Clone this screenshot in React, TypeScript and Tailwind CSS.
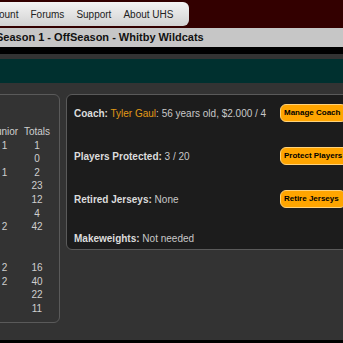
const navItems = ['ount', 'Forums', 'Support', 'About UHS']

const stats: [string, string][] = [
  ['1', '1'],
  ['', '0'],
  ['1', '2'],
  ['', '23'],
  ['', '12'],
  ['', '4'],
  ['2', '42'],
  ['', ''],
  ['', ''],
  ['2', '16'],
  ['2', '40'],
  ['', '22'],
  ['', '11'],
]

function OrangeButton({ label }: { label: string }) {
  return (
    <button className="h-[18px] justify-self-start whitespace-nowrap rounded-[6px] border border-[#ffd27a] bg-[#ffa500] pl-[3px] pr-[6px] text-left text-[8px] font-bold leading-none text-black">
      {label}
    </button>
  )
}

export default function App() {
  return (
    <div className="h-[343px] w-[343px] overflow-hidden bg-[#333333] font-['Liberation_Sans',Arial,sans-serif]">
      {/* top nav */}
      <div className="h-[28px] bg-[#330000] pt-[2px]">
        <div className="flex h-[24px] w-[189px] items-center gap-[12px] rounded-r-[6px] bg-gradient-to-b from-[#f4f4f4] to-[#d2d2d2] text-[10px] text-[#222]">
          {navItems.map((item, i) => (
            <span key={item} className={i === 0 ? '-ml-[1px]' : ''}>
              {item}
            </span>
          ))}
        </div>
      </div>

      {/* season title */}
      <div className="flex h-[19px] items-center overflow-hidden whitespace-nowrap bg-[#c6c6c6] text-[11px] font-bold text-[#111]">
        <span className="-ml-[4px]">Season 1 - OffSeason - Whitby Wildcats</span>
      </div>
      <div className="h-[7px] bg-black" />
      <div className="h-[5px] bg-[#333333]" />
      <div className="h-[24px] bg-[#00302f]" />

      {/* content */}
      <div className="flex h-[257px] gap-[6px] pt-[11px]">
        <div className="-ml-[40px] h-[229px] w-[100px] shrink-0 rounded-[6px] border border-[#5a5a5a] pt-[30px] text-[10px] leading-[13.6px] text-[#cfcfcf]">
          <div className="flex justify-end pr-[7px]">
            <span className="w-[35px] text-center">Junior</span>
            <span className="w-[30px] text-center">Totals</span>
          </div>
          {stats.map(([junior, total], i) => (
            <div key={i} className="flex h-[13.6px] justify-end pr-[7px]">
              <span className="w-[35px] text-center">{junior}</span>
              <span className="w-[30px] text-center">{total}</span>
            </div>
          ))}
        </div>

        <div className="-mr-[60px] flex h-[156px] flex-1 flex-col rounded-[6px] border border-[#5a5a5a] bg-[#1c1c1c] pl-[7px] pt-[9px] text-[10px] text-[#c8c8c8]">
          <div className="grid h-[18px] grid-cols-[206px_auto] items-center">
            <span>
              <b className="text-[#dcdcdc]">Coach:</b> <span className="text-[#e09a16]">Tyler Gaul</span>: 56 years old, $2.000 / 4
            </span>
            <OrangeButton label="Manage Coach" />
          </div>
          <div className="mt-[25px] grid h-[18px] grid-cols-[206px_auto] items-center">
            <span>
              <b className="text-[#dcdcdc]">Players Protected:</b> 3 / 20
            </span>
            <OrangeButton label="Protect Players" />
          </div>
          <div className="mt-[25px] grid h-[18px] grid-cols-[206px_auto] items-center">
            <span>
              <b className="text-[#dcdcdc]">Retired Jerseys:</b> None
            </span>
            <OrangeButton label="Retire Jerseys" />
          </div>
          <div className="mt-[21px] flex h-[18px] items-center">
            <span>
              <b className="text-[#dcdcdc]">Makeweights:</b> Not needed
            </span>
          </div>
        </div>
      </div>
      <div className="h-[3px] bg-black" />
    </div>
  )
}
